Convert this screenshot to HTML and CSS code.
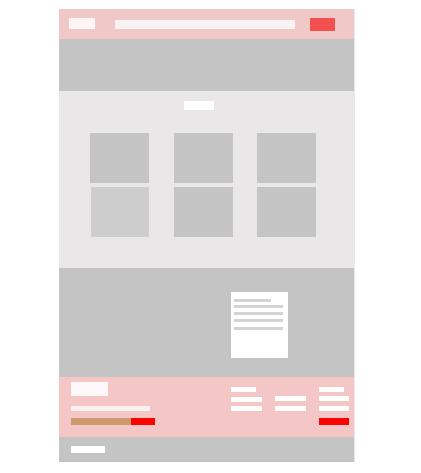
FILE: index.html
```html
<!DOCTYPE html>
<html>
<head>
    <title>Wireframe</title>
    <link rel="stylesheet" href="styles.css">
</head>
<body>
<div class="page">
    <div class="header">
        <div class="logo"></div>
        <div class="search"></div>
        <div class="cta"></div>
    </div>
    <div class="hero"></div>
    <div class="features">
        <div class="title"></div>
        <div class="grid">
            <div class="tile"></div>
            <div class="tile"></div>
            <div class="tile"></div>
            <div class="tile light"></div>
            <div class="tile"></div>
            <div class="tile"></div>
        </div>
    </div>
    <div class="showcase">
        <div class="card">
            <div class="line short"></div>
            <div class="line"></div>
            <div class="line gap4"></div>
            <div class="line gap4"></div>
            <div class="line gap5"></div>
        </div>
    </div>
    <div class="footer">
        <div class="brand">
            <div class="brand-logo"></div>
            <div class="brand-text"></div>
            <div class="progress">
                <div class="done"></div>
                <div class="left"></div>
            </div>
        </div>
        <div class="links first">
            <div class="link w25"></div>
            <div class="link spaced5"></div>
            <div class="link"></div>
        </div>
        <div class="links second">
            <div class="link"></div>
            <div class="link spaced5"></div>
        </div>
        <div class="links third">
            <div class="link w25"></div>
            <div class="link"></div>
            <div class="link spaced5"></div>
            <div class="button"></div>
        </div>
    </div>
    <div class="bottom">
        <div class="copy"></div>
    </div>
</div>
</body>
</html>
```

FILE: styles.css
```css
body {
    margin: 0;
    background: #ffffff;
    font-family: "Liberation Sans", Arial, sans-serif;
}

.page {
    margin: 9px 0 0 59px;
    width: 295px;
    box-shadow: 1px 0 0 #e8e8e8;
}

.header {
    display: flex;
    align-items: flex-start;
    height: 30px;
    padding: 9px 0 0 10px;
    box-sizing: border-box;
    background-color: #f0c8c8;
}

.logo {
    width: 26px;
    height: 11px;
    background-color: #fff5f5;
}

.search {
    width: 180px;
    height: 9px;
    margin: 2px 0 0 20px;
    background-color: #f8f2f2;
}

.cta {
    width: 25px;
    height: 13px;
    margin-left: 15px;
    background-color: #f44f4f;
}

.hero {
    height: 52px;
    background-color: #c4c4c4;
}

.features {
    height: 177px;
    padding-top: 10px;
    box-sizing: border-box;
    background-color: #e9e7e8;
}

.title {
    width: 30px;
    height: 9px;
    margin-left: 125px;
    background-color: #ffffff;
}

.grid {
    display: grid;
    grid-template-columns: 59px 59px 59px;
    column-gap: 24.5px;
    row-gap: 4px;
    margin: 23px 0 0 31px;
}

.tile {
    height: 50px;
    background-color: #c4c4c4;
}

.tile.light {
    margin-left: 1px;
    background-color: #cdcdcd;
}

.showcase {
    height: 109px;
    padding: 24px 0 0 172px;
    box-sizing: border-box;
    background-color: #c4c4c4;
}

.card {
    width: 57px;
    height: 66px;
    padding: 7px 0 0 3px;
    box-sizing: border-box;
    background-color: #ffffff;
}

.line {
    width: 49px;
    height: 3px;
    margin-top: 3px;
    background-color: #d3d3d3;
}

.line.short {
    width: 37px;
    margin-top: 0;
}

.line.gap4 {
    margin-top: 4px;
}

.line.gap5 {
    margin-top: 5px;
}

.footer {
    display: flex;
    align-items: flex-start;
    height: 60px;
    padding-left: 12px;
    box-sizing: border-box;
    background-color: #f4c6c6;
}

.brand {
    width: 160px;
    padding-top: 5px;
}

.brand-logo {
    width: 37px;
    height: 14px;
    background-color: #fff8f8;
}

.brand-text {
    width: 79px;
    height: 5px;
    margin-top: 10px;
    background-color: #fbf1f1;
}

.progress {
    display: flex;
    width: 84px;
    height: 7px;
    margin-top: 7px;
}

.progress .done {
    width: 60px;
    background-color: #cc9a6e;
}

.progress .left {
    flex: 1;
    background-color: #ff0000;
}

.links {
    width: 31px;
    padding-top: 10px;
}

.links.second {
    margin-left: 13px;
    padding-top: 19px;
}

.links.third {
    width: 30px;
    margin-left: 13px;
}

.link {
    height: 5px;
    margin-top: 4px;
    background-color: #ffffff;
}

.link:first-child {
    margin-top: 0;
}

.link.spaced5 {
    margin-top: 5px;
}

.w25 {
    width: 25px;
}

.button {
    height: 7px;
    margin-top: 7px;
    background-color: #ff0000;
}

.bottom {
    height: 25px;
    padding: 9px 0 0 12px;
    box-sizing: border-box;
    background-color: #c4c4c4;
}

.copy {
    width: 34px;
    height: 7px;
    background-color: #ffffff;
}
```
